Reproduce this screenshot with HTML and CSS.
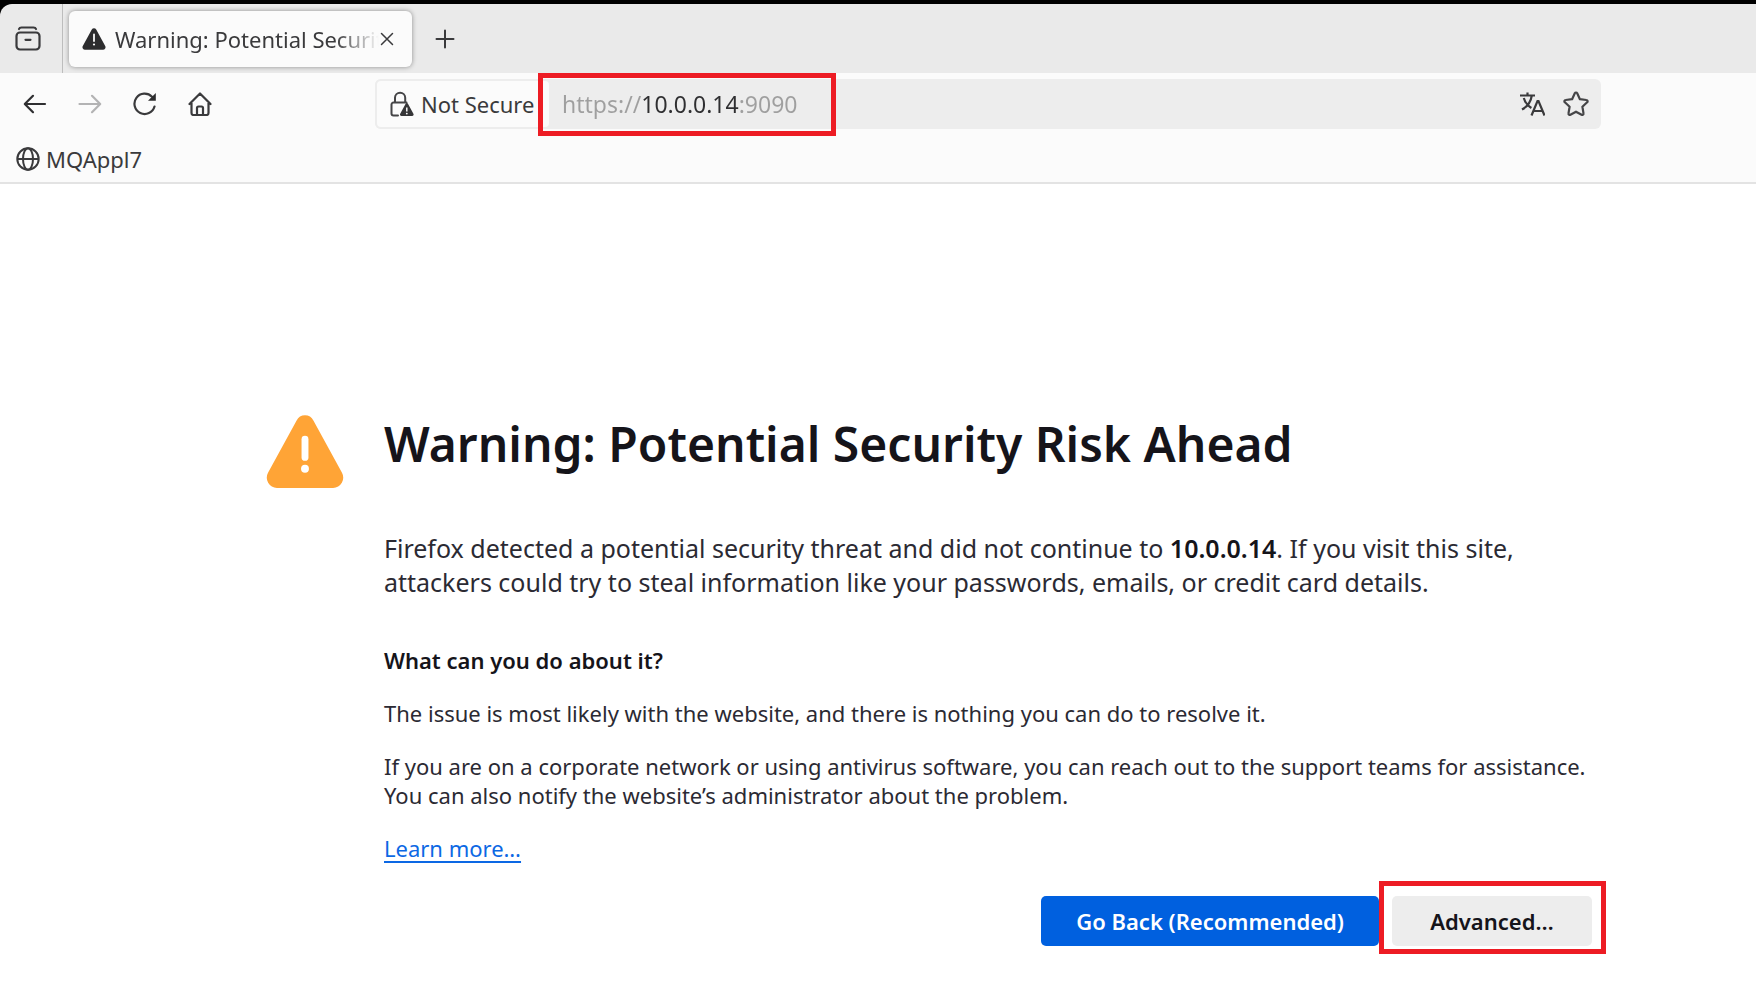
FILE: index.html
```html
<!DOCTYPE html>
<html lang="en">
<head>
<meta charset="utf-8">
<title>Warning: Potential Security Risk Ahead</title>
<link rel="stylesheet" href="styles.css">
</head>
<body>
<div class="browser">
  <div class="tabstrip">
    <div class="view-cell">
      <button class="icon-btn" aria-label="Recent browsing">
        <svg width="28" height="28" viewBox="0 0 28 28" fill="none" stroke="#3a3a3c" stroke-width="2.200" stroke-linecap="round"><path d="M6 4C6.500 2.500 7.500 2.500 8.500 2.500h12c1 0 2 .1 2.500 1.500"/><rect x="3.500" y="7.500" width="23" height="17" rx="3.500"/><path d="M12.500 14.800h5"/></svg>
      </button>
    </div>
    <div class="tab">
      <svg width="24" height="24" viewBox="0 0 24 24"><path d="M9.800 2.500a2.500 2.500 0 0 1 4.400 0l9 16.500a2.500 2.500 0 0 1-2.200 3.700H3A2.500 2.500 0 0 1 .8 19z" fill="#2c2c2e"/><path d="M12 7.500v6.500" stroke="#fbfbfb" stroke-width="1.800" stroke-linecap="round"/><circle cx="12" cy="17.500" r="1.100" fill="#fbfbfb"/></svg>
      <span class="tab-title">Warning: Potential Security Risk Ahead</span>
      <button class="icon-btn" aria-label="Close tab">
        <svg width="16" height="16" viewBox="0 0 16 16" stroke="#3a3a3c" stroke-width="1.500" stroke-linecap="round"><path d="M2.500 2.500l11 11M13.500 2.500l-11 11"/></svg>
      </button>
    </div>
    <button class="icon-btn new-tab" aria-label="New tab">
      <svg width="20" height="20" viewBox="0 0 20 20" stroke="#3a3a3c" stroke-width="2" stroke-linecap="round"><path d="M10 1.500v17M1.500 10h17"/></svg>
    </button>
  </div>

  <div class="toolbar">
    <div class="nav-buttons">
      <button class="icon-btn" aria-label="Back">
        <svg width="24" height="24" viewBox="0 0 24 24" fill="none" stroke="#2f2f31" stroke-width="2.200" stroke-linecap="round" stroke-linejoin="round"><path d="M22 12H2M10 3.800L1.800 12l8.200 8.200"/></svg>
      </button>
      <button class="icon-btn" aria-label="Forward" disabled>
        <svg width="24" height="24" viewBox="0 0 24 24" fill="none" stroke="#b3b3b4" stroke-width="2.200" stroke-linecap="round" stroke-linejoin="round"><path d="M1.500 12H22M14 3.800l8.200 8.200-8.200 8.200"/></svg>
      </button>
      <button class="icon-btn" aria-label="Reload">
        <svg width="24" height="24" viewBox="0 0 24 24" fill="none" stroke="#3a3a3c" stroke-width="2.200" stroke-linecap="round"><path d="M21.500 14.500A10.200 10.200 0 1 1 19 4.700"/><path d="M22.800 1v7.800H15z" fill="#2c2c2e" stroke="none"/></svg>
      </button>
      <button class="icon-btn" aria-label="Home">
        <svg width="24" height="24" viewBox="0 0 24 24" fill="none" stroke="#3a3a3c" stroke-width="2.200" stroke-linecap="round" stroke-linejoin="round"><path d="M1.500 12L12 1.500 22.500 12M3.500 11v10a2 2 0 0 0 2 2h13a2 2 0 0 0 2-2V11M9 22.500V16a1.500 1.500 0 0 1 1.500-1.500h3A1.500 1.500 0 0 1 15 16v6.500"/></svg>
      </button>
    </div>
    <div class="urlbar">
      <button class="identity">
        <svg width="24" height="26" viewBox="0 0 24 26" fill="none"><path d="M5 11.500V6.800a5 5 0 0 1 10.200 0v4.700M8 24.500H3.500a2 2 0 0 1-2-2v-9a2 2 0 0 1 2-2h13" stroke="#454547" stroke-width="2" stroke-linecap="round"/><path d="M15.500 13a1.400 1.400 0 0 1 2.600 0l5.300 9.700a1.500 1.500 0 0 1-1.300 2.300H11.500a1.500 1.500 0 0 1-1.300-2.300z" fill="#363638"/><path d="M16.800 16.500v4" stroke="#fbfbfb" stroke-width="1.500"/><circle cx="16.800" cy="22.600" r=".9" fill="#fbfbfb"/></svg>
        <span>Not Secure</span>
      </button>
      <input class="address" type="text" aria-label="Address" value="https://10.0.0.14:9090">
      <button class="icon-btn" aria-label="Translate page">
        <svg width="26" height="26" viewBox="0 0 26 26" fill="none" stroke="#3a3a3c" stroke-width="2.200"><path d="M1 4.500h15M8.500 1.500v3M3 18.500c5.500-3 8.800-7.500 9.800-14M4.800 7c1.200 4.300 4 7.800 7.600 10M12.500 24.500L18.500 10h1l6 14.500M14.500 20h9"/></svg>
      </button>
      <button class="icon-btn" aria-label="Bookmark this page">
        <svg width="26" height="26" viewBox="0 0 26 26" fill="none" stroke="#454547" stroke-width="2.200" stroke-linejoin="round"><path d="M11.800 2.300a1.300 1.300 0 0 1 2.400 0l2.700 5.900 6.500.8a1.300 1.300 0 0 1 .7 2.300l-4.700 4.500 1.100 6.600a1.300 1.300 0 0 1-1.900 1.400L13 20.700l-5.600 3.100a1.300 1.300 0 0 1-1.900-1.400l1.100-6.600-4.700-4.500A1.300 1.300 0 0 1 2.600 9l6.500-.8z"/></svg>
      </button>
      <div class="mark mark-address"></div>
    </div>
  </div>

  <div class="bookmarks">
    <a class="bookmark" href="#">
      <svg width="24" height="24" viewBox="0 0 24 24" fill="none" stroke="#3a3a3c" stroke-width="2"><circle cx="12" cy="12" r="10.700"/><ellipse cx="12" cy="12" rx="5" ry="10.700"/><path d="M1.500 12h21"/></svg>
      MQAppl7
    </a>
  </div>
</div>

<main class="error-page">
  <svg class="warning-icon" width="78" height="73" viewBox="0 0 78 74"><path d="M30.500 5.500a9.500 9.500 0 0 1 17 0L76.500 58.500A10.500 10.500 0 0 1 67.500 74h-57A10.500 10.500 0 0 1 1.500 58.500z" fill="#ffa436"/><path d="M39 24.500v18.500" stroke="#fff" stroke-width="7" stroke-linecap="round"/><circle cx="39" cy="54.500" r="4" fill="#fff"/></svg>
  <div class="error-body">
    <h1>Warning: Potential Security Risk Ahead</h1>
    <p class="intro">Firefox detected a potential security threat and did not continue to <b>10.0.0.14</b>. If you visit this site,<br>attackers could try to steal information like your passwords, emails, or credit card details.</p>
    <div class="details">
      <h2>What can you do about it?</h2>
      <p>The issue is most likely with the website, and there is nothing you can do to resolve it.</p>
      <p>If you are on a corporate network or using antivirus software, you can reach out to the support teams for assistance.<br>You can also notify the website’s administrator about the problem.</p>
      <p><a class="learn" href="#">Learn more…</a></p>
    </div>
    <div class="actions">
      <button class="btn primary">Go Back (Recommended)</button>
      <div class="marked"><button class="btn">Advanced…</button><div class="mark mark-button"></div></div>
    </div>
  </div>
</main>
</body>
</html>
```
FILE: styles.css
```css
* { box-sizing: border-box; }
body {
  margin: 0;
  background: #fff;
  color: #15141a;
  font-family: "Noto Sans", "Open Sans", sans-serif;
  font-size: 22px;
}
button, input { font: inherit; color: inherit; }
svg { display: block; flex: none; }
h1, h2, p { margin: 0; }

.browser {
  background: #000;
  padding-top: 4px;
  color: #3a3a3c;
}
.icon-btn {
  display: flex;
  padding: 0;
  border: 0;
  background: none;
}
.tabstrip {
  display: flex;
  align-items: center;
  height: 69px;
  background: #eaeaea;
  border-top-left-radius: 12px;
}
.view-cell {
  display: flex;
  align-items: center;
  align-self: stretch;
  width: 63px;
  padding-left: 13px;
  border-right: 1px solid #bdbdbd;
}
.tab {
  display: flex;
  align-items: center;
  width: 343px;
  height: 56px;
  margin-left: 6px;
  padding: 0 17px 0 13px;
  background: #fbfbfb;
  border-radius: 6px;
  box-shadow: 0 0 5px rgba(0, 0, 0, .4);
}
.tab-title {
  flex: 1;
  min-width: 0;
  margin-left: 9px;
  overflow: hidden;
  white-space: nowrap;
  mask-image: linear-gradient(to left, transparent, #000 44px);
}
.new-tab { margin-left: 23px; }

.toolbar {
  display: flex;
  align-items: center;
  height: 62px;
  padding-right: 155px;
  background: #fbfbfb;
}
.nav-buttons {
  display: flex;
  gap: 31px;
  width: 375px;
  padding-left: 23px;
}
.urlbar {
  position: relative;
  display: flex;
  align-items: center;
  flex: 1;
  height: 50px;
  padding-right: 12px;
  background: #ededed;
  border-radius: 6px;
}
.identity {
  display: flex;
  align-items: center;
  gap: 7px;
  width: 176px;
  height: 50px;
  padding: 0 0 0 13px;
  white-space: nowrap;
  background: #fbfbfb;
  border: 2px solid #ededed;
  border-radius: 6px;
}
.address {
  flex: 1;
  min-width: 0;
  padding: 0;
  margin-left: 11px;
  border: 0;
  outline: 0;
  color: transparent;
  font-size: 23px;
  background: linear-gradient(90deg, #9f9f9f 79px, #2f2f31 79px 178px, #9f9f9f 178px);
  background-clip: text;
}
.urlbar .icon-btn { margin-left: 18px; }
.mark {
  position: absolute;
  border: 5px solid #ed1c24;
  pointer-events: none;
}
.mark-address { left: 163px; top: -6px; width: 298px; height: 63px; }
.mark-button { inset: -15px -14px -8px -13px; }

.bookmarks {
  height: 49px;
  padding: 8px 16px;
  background: #fbfbfb;
  border-bottom: 2px solid #e3e3e3;
}
.bookmark {
  display: inline-flex;
  align-items: center;
  gap: 6px;
  color: inherit;
  line-height: 32px;
  text-decoration: none;
}

.error-page {
  display: flex;
  align-items: flex-start;
  gap: 40px;
  padding: 231px 164px 40px 266px;
}
.error-body { flex: 1; min-width: 0; }
h1 {
  font-size: 48px;
  font-weight: 600;
  line-height: 58px;
}
.intro {
  margin-top: 58px;
  color: #2b2a33;
  font-size: 25px;
  line-height: 34px;
}
.intro b { color: #15141a; font-weight: 600; }
.details {
  display: grid;
  gap: 24px;
  margin-top: 47px;
  color: #2b2a33;
  line-height: 29px;
}
h2 { color: #15141a; font-size: 22px; font-weight: 600; }
.learn {
  color: #0c68e4;
  text-underline-offset: 4px;
}
.actions {
  display: flex;
  justify-content: flex-end;
  gap: 13px;
  margin-top: 33px;
}
.btn {
  min-width: 200px;
  height: 50px;
  padding: 0 35px;
  border: 0;
  border-radius: 5px;
  background: #ededed;
  font-weight: 600;
}
.primary { background: #0060df; color: #fff; }
.marked { position: relative; }
```
